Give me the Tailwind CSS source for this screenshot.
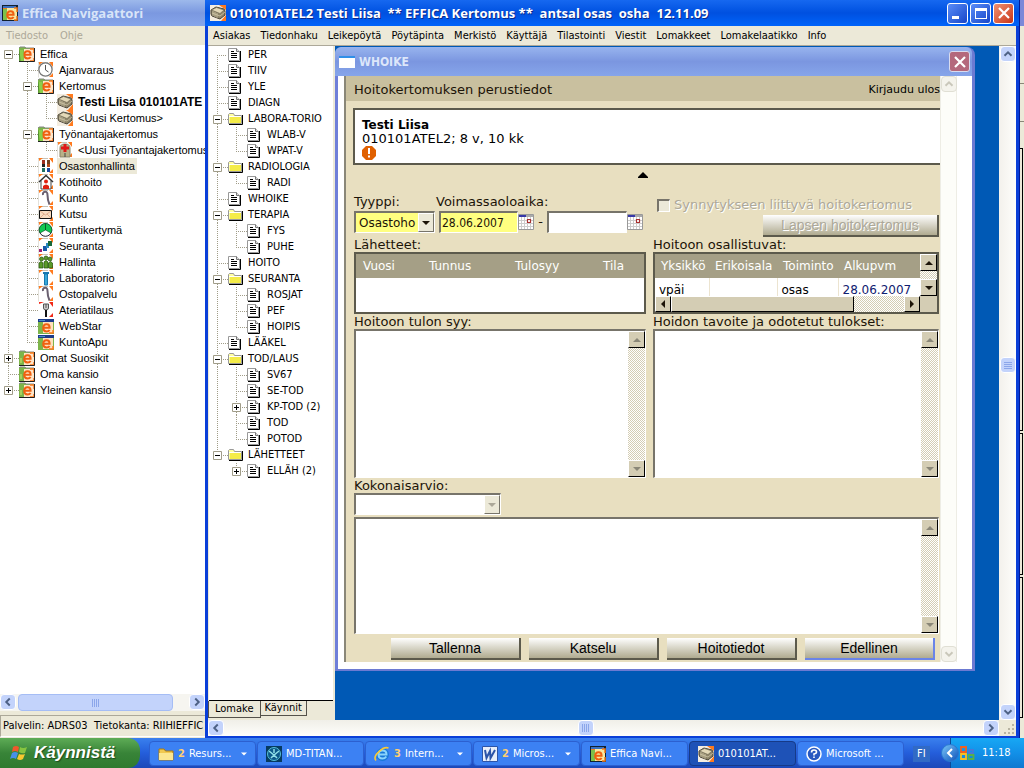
<!DOCTYPE html>
<html lang="fi">
<head>
    <meta charset="UTF-8">
    <meta name="viewport" content="width=device-width, initial-scale=1">
    <title>Effica Kertomus</title>
    <script src="https://cdn.jsdelivr.net/npm/@tailwindcss/browser@4"></script>
</head>
<body class="h-screen flex flex-col overflow-hidden bg-[#ece9d8] text-black font-['DejaVu_Sans_Condensed','DejaVu_Sans',sans-serif] text-[11px] leading-4">

    <!-- icon sprite -->
    <svg class="hidden" xmlns="http://www.w3.org/2000/svg">
        <symbol id="line-v" viewBox="0 0 19 16"><path d="M8.5 0V16" fill="none" stroke="#a09c88" stroke-dasharray="1 1"/></symbol>
        <symbol id="line-f" viewBox="0 0 19 16"><path d="M8.5 8V16M8 8.5H18" fill="none" stroke="#a09c88" stroke-dasharray="1 1"/></symbol>
        <symbol id="line-t" viewBox="0 0 19 16"><path d="M8.5 0V16M10 8.5H19" fill="none" stroke="#a09c88" stroke-dasharray="1 1"/></symbol>
        <symbol id="line-l" viewBox="0 0 19 16"><path d="M8.5 0V8M8 8.5H19" fill="none" stroke="#a09c88" stroke-dasharray="1 1"/></symbol>
        <symbol id="line-r" viewBox="0 0 19 16"><path d="M8.5 12V16M14 8.5H19" fill="none" stroke="#a09c88" stroke-dasharray="1 1"/><path d="M4.500 4.500h8v8h-8z" fill="#fff" stroke="#a09c88"/><path d="M6 8.500h5" stroke="#000"/></symbol>
        <symbol id="line-m" viewBox="0 0 19 16"><path d="M8.5 0V4M8.5 13V16M14 8.5H19" fill="none" stroke="#a09c88" stroke-dasharray="1 1"/><path d="M4.500 4.500h8v8h-8z" fill="#fff" stroke="#a09c88"/><path d="M6 8.500h5" stroke="#000"/></symbol>
        <symbol id="line-M" viewBox="0 0 19 16"><path d="M8.5 0V4M14 8.5H19" fill="none" stroke="#a09c88" stroke-dasharray="1 1"/><path d="M4.500 4.500h8v8h-8z" fill="#fff" stroke="#a09c88"/><path d="M6 8.500h5" stroke="#000"/></symbol>
        <symbol id="line-p" viewBox="0 0 19 16"><path d="M8.5 0V4M8.5 13V16M14 8.5H19" fill="none" stroke="#a09c88" stroke-dasharray="1 1"/><path d="M4.500 4.500h8v8h-8z" fill="#fff" stroke="#a09c88"/><path d="M6 8.500h5M8.500 6v5" stroke="#000"/></symbol>
        <symbol id="line-P" viewBox="0 0 19 16"><path d="M8.5 0V4M14 8.5H19" fill="none" stroke="#a09c88" stroke-dasharray="1 1"/><path d="M4.500 4.500h8v8h-8z" fill="#fff" stroke="#a09c88"/><path d="M6 8.500h5M8.500 6v5" stroke="#000"/></symbol>

        <symbol id="swirl" viewBox="0 0 16 16"><path d="M5 8.700h6.600c0-2-1-3.400-3-3.400-2.200 0-3.400 1.600-3.400 3.800 0 2.200 1.400 3.400 3.400 3.400 1.400 0 2.400-.6 3-1.600" fill="none" stroke="#f06010" stroke-width="2"/></symbol>
        <symbol id="efolder" viewBox="0 0 16 16"><path d="M0 2 1 1h5l1 1h8v14H0z" fill="#7db54a"/><path d="M0 2 1 1h5l1 1h8" fill="none" stroke="#888" /><path d="M5 3h10v12H5z" fill="#ffe6c8"/><path d="M11 3h4v4M15 12v3h-4" fill="none" stroke="#ff7a1e" stroke-width="1.500"/><path d="M1 8h2v5H1z" fill="#a9cf5c"/><use href="#swirl"/><path d="M15.500 2v13.500H0" fill="none" stroke="#222"/></symbol>
        <symbol id="eopen" viewBox="0 0 16 16"><use href="#efolder"/><path d="M0 4h4l1 11H1z" fill="#8ccf4a"/><path d="M0 4l1 11" stroke="#4c8a2c"/></symbol>
        <symbol id="eweb" viewBox="0 0 16 16"><path d="M0 1h16v15H0z" fill="#7db54a"/><path d="M5 4h10v11H5z" fill="#ffe0bc"/><path d="M15 12v3h-4" fill="none" stroke="#ff7a1e" stroke-width="1.500"/><path d="M0 1h16v3H0z" fill="#1c3b8a"/><path d="M1 2h6v1H1z" fill="#4a90c8"/><use href="#swirl" y="1"/></symbol>
        <symbol id="elogo" viewBox="0 0 16 16"><path d="M0 0h16v16H0z" fill="#102030"/><path d="M1 1h4v3H1z" fill="#f08020"/><path d="M1 4h4v11H1z" fill="#7cc04a"/><path d="M5 3h10v12H5z" fill="#f8e7a0"/><path d="M1 1h13v2H1z" fill="#3a70c0"/><path d="M12 3h3v4M15 11v4h-3" fill="none" stroke="#f07818" stroke-width="1.500"/><use href="#swirl" y="1"/></symbol>
        <symbol id="corners" viewBox="0 0 16 16"><path d="M0 0h16v16H0z" fill="#fff"/><path d="M0 15.500V.500h10" fill="none" stroke="#c8c4b8"/><path d="M1 0h4L1 3zM11 0h4v5zM15 11v4h-4z" fill="#ff7a1e"/></symbol>
        <symbol id="clock" viewBox="0 0 16 16"><use href="#corners"/><circle cx="7.500" cy="7.500" r="6.600" fill="#fff" stroke="#777" stroke-width="1.300"/><path d="M7.500 3v5l3 2" fill="none" stroke="#555" /></symbol>
        <symbol id="box" viewBox="0 0 16 16"><path d="M0 0h16v16H0z" fill="#f4ede0"/><path d="M9 0h7v5zM16 10v6h-5z" fill="#ff7a1e"/><path d="M1 5l5-3 8 2 1 2v4l-5 4-8-3-1-2z" fill="#8d8468" stroke="#4a4438"/><path d="M1.500 5l5-2.500L14 5l-4 3.500z" fill="#e4d9b8" stroke="#6b6450" stroke-width=".6"/><path d="M2 8l8 3 5-4M3 6v5M5 7v5M7 8v5" fill="none" stroke="#d8ceb0" stroke-width=".7"/></symbol>
        <symbol id="cross" viewBox="0 0 16 16"><use href="#corners"/><path d="M3 15V6q0-4 5-4t5 4v9z" fill="#b8b088" stroke="#8a8466"/><path d="M8 2v8M4 6h8" stroke="#e01818" stroke-width="3"/><path d="M8 11v4" stroke="#444"/></symbol>
        <symbol id="people" viewBox="0 0 16 16"><use href="#corners"/><path d="M4 2h3v4H4z" fill="#a03020"/><path d="M9 2h3v4H9z" fill="#704020"/><path d="M4 6h3v3H4z" fill="#222"/><path d="M9 6h3v3H9z" fill="#b84818"/><path d="M4 10h3v4H4z" fill="#207060"/><path d="M9 10h3v4H9z" fill="#1848a0"/></symbol>
        <symbol id="house" viewBox="0 0 16 16"><use href="#corners"/><path d="M3 7v8h10V7" fill="#fff" stroke="#444"/><path d="M1 8 8 1.500 15 8" fill="none" stroke="#333" stroke-width="1.600"/><circle cx="8" cy="7.500" r="2" fill="#e02010"/><path d="M5 15v-3q3-3 6 0v3z" fill="#e02010"/></symbol>
        <symbol id="cane" viewBox="0 0 16 16"><use href="#corners"/><path d="M5 5q-.5-3 2-3.200T9.500 5q0 5 2 9.500" fill="none" stroke="#6a6070" stroke-width="2"/></symbol>
        <symbol id="mail" viewBox="0 0 16 16"><use href="#corners"/><path d="M1.500 4.500h12v8h-12z" fill="#f8dcc0" stroke="#111"/><path d="M2 5l5.500 4L13 5M2 12l4-4M13 12 9 8" fill="none" stroke="#d8a080" stroke-width=".8"/></symbol>
        <symbol id="pie" viewBox="0 0 16 16"><use href="#corners"/><circle cx="7.500" cy="8" r="6.300" fill="#fff" stroke="#223"/><path d="M7.500 8V1.500A6.400 6.400 0 0 0 2 11zM7.500 8V1.500A6.400 6.400 0 0 1 13 11z" fill="#10c850" stroke="#084820" stroke-width=".6"/></symbol>
        <symbol id="chart" viewBox="0 0 16 16"><use href="#corners"/><path d="M1 11h3v3H1z" fill="#a02070"/><path d="M5 8h4v5H5z" fill="#1858a8"/><path d="M8 5h3v5H8z" fill="#2888c0"/><path d="M10 3h4v5h-4z" fill="#186838"/></symbol>
        <symbol id="group" viewBox="0 0 16 16"><use href="#corners"/><g fill="#5a9a28" stroke="#245010" stroke-width=".7"><circle cx="3.500" cy="5" r="2"/><circle cx="8" cy="4" r="2"/><circle cx="12" cy="5" r="2"/><path d="M1 14V9q2-3 4 0v5zM6 14V8q2-3 4 0v6zM10.500 14V9q2-3 4 0v5z"/></g></symbol>
        <symbol id="tube" viewBox="0 0 16 16"><use href="#corners"/><path d="M5 2h6v2H5z" fill="#1878b0"/><path d="M6.500 4h3v11h-3z" fill="#38a8d8" stroke="#1878b0"/></symbol>
        <symbol id="fork" viewBox="0 0 16 16"><path d="M0 0h16v16H0z" fill="#fff"/><path d="M1 0h5L1 2zM11 0h4v5zM15 11v4h-4z" fill="#f02818"/><path d="M5.500 2v4q0 2 2.500 2t2.500-2V2z" fill="#ccc" stroke="#555"/><path d="M8 2v4" stroke="#555"/><path d="M8 8v7" stroke="#111" stroke-width="2"/></symbol>
        <symbol id="doc" viewBox="0 0 16 16"><path d="M.5 1.500h8l3 3v9H.5z" fill="#fff" stroke="#999"/><path d="M8.500 1.500v3h3" fill="#ddd" stroke="#777"/><path d="M12.500 4v10.500H1" fill="none" stroke="#000"/><path d="M3 4.500h3M3 6.500h6M3 8.500h6M3 10.500h6" stroke="#000"/></symbol>
        <symbol id="folder" viewBox="0 0 16 16"><path d="M.5 12.500v-9l1-1h4l1 2h7v8z" fill="#ffffa0" stroke="#999"/><path d="M1 5.500h12" stroke="#fff"/><path d="M2 6h11v6H2z" fill="#f4ec48"/><path d="M14.500 4v9.500H1" fill="none" stroke="#000"/></symbol>

        <symbol id="chev-l" viewBox="0 0 16 16"><path d="M10 4 6 8l4 4" fill="none" stroke="#4d6185" stroke-width="2.200"/></symbol>
        <symbol id="chev-r" viewBox="0 0 16 16"><path d="M6 4l4 4-4 4" fill="none" stroke="#4d6185" stroke-width="2.200"/></symbol>
        <symbol id="chev-u" viewBox="0 0 16 16"><path d="M4 10l4-4 4 4" fill="none" stroke="currentColor" stroke-width="2.200"/></symbol>
        <symbol id="chev-d" viewBox="0 0 16 16"><path d="M4 6l4 4 4-4" fill="none" stroke="currentColor" stroke-width="2.200"/></symbol>
        <symbol id="tri-u" viewBox="0 0 8 8"><path d="M0 6h8L4 2z" fill="currentColor"/></symbol>
        <symbol id="tri-d" viewBox="0 0 8 8"><path d="M0 2h8L4 6z" fill="currentColor"/></symbol>
        <symbol id="tri-l" viewBox="0 0 8 8"><path d="M6 0v8L2 4z" fill="currentColor"/></symbol>
        <symbol id="tri-r" viewBox="0 0 8 8"><path d="M2 0v8l4-4z" fill="currentColor"/></symbol>
        <symbol id="cal" viewBox="0 0 16 16"><path d="M.5.500h15v15H.5z" fill="#fff" stroke="#999"/><path d="M1 1h14v2H1z" fill="#aaa"/><path d="M1 1h7v2H1z" fill="#3838a8"/><path d="M1 6.500h14M1 9.500h14M1 12.500h14M3.500 3v12M6.500 3v12M9.500 3v12M12.500 3v12" stroke="#ccc"/><path d="M9.500 5.500h3v3h-3z" fill="#fff" stroke="#a83030" stroke-width="1.200"/></symbol>
    </svg>

    <main class="flex flex-1 min-h-0">

        <!-- navigator window -->
        <section class="w-[205px] shrink-0 flex flex-col bg-[#ece9d8] overflow-hidden whitespace-nowrap">
            <header class="h-[26px] flex items-center gap-1 px-0.5 bg-linear-to-b from-[#9db9eb] via-[#7b98e0] to-[#86a5ea] text-[#d8e4f8]">
                <svg class="size-4"><use href="#elogo"/></svg>
                <h1 class="font-['Open_Sans',sans-serif] text-[13px] font-bold">Effica Navigaattori</h1>
            </header>
            <nav class="h-[19px] flex items-center gap-3 px-1.5 text-[#aca899]">
                <button>Tiedosto</button>
                <button>Ohje</button>
            </nav>
            <div class="flex-1 min-h-0 bg-white pt-px overflow-hidden font-['Liberation_Sans',Arial,sans-serif]">
                <ul id="nav-tree"></ul>
            </div>
            <div class="h-[18px] flex bg-[#f6f5f0] border-t border-white">
                <button aria-label="Vasen" class="size-4 rounded-sm bg-[#c3d3fb] border border-white"><svg class="size-3.5"><use href="#chev-l"/></svg></button>
                <div class="ml-0.5 w-[155px] rounded-sm bg-[#c3d3fb] border border-[#a5bdf5] flex items-center justify-center gap-px">
                    <i class="w-px h-2 bg-[#8ba6ea]"></i><i class="w-px h-2 bg-[#8ba6ea]"></i><i class="w-px h-2 bg-[#8ba6ea]"></i><i class="w-px h-2 bg-[#8ba6ea]"></i>
                </div>
                <button aria-label="Oikea" class="ml-auto size-4 rounded-sm bg-[#c3d3fb] border border-white"><svg class="size-3.5"><use href="#chev-r"/></svg></button>
            </div>
            <footer class="h-[27px] flex items-center pt-1">
                <p class="flex-1 mb-0.5 px-0.5 border border-[#aca899] border-r-0 border-b-white leading-5">Palvelin: ADRS03&nbsp; Tietokanta: RIIHIEFFIC</p>
            </footer>
        </section>

        <!-- patient record window -->
        <section class="flex-1 min-w-0 flex flex-col bg-[#0a3fd8]">
            <header class="h-[26px] shrink-0 flex items-center pl-[5px] pr-[5px] bg-linear-to-b from-[#1668f0] via-[#0050e0] to-[#0064fa] text-white">
                <svg class="size-4 mr-1"><use href="#box"/></svg>
                <h2 class="flex-1 font-['Open_Sans',sans-serif] text-[13px] font-bold whitespace-pre text-shadow-[1px_1px_0_#0a2a8c]">010101ATEL2 Testi Liisa  ** EFFICA Kertomus **  antsal osas  osha  12.11.09</h2>
                <div class="flex gap-0.5">
                    <button aria-label="Pienennä" class="size-[21px] rounded-[3px] border border-white bg-linear-to-br from-[#5a8cf8] to-[#1844c8] flex items-end p-1"><i class="w-[7px] h-[3px] bg-white"></i></button>
                    <button aria-label="Suurenna" class="size-[21px] rounded-[3px] border border-white bg-linear-to-br from-[#5a8cf8] to-[#1844c8] flex items-center justify-center"><i class="w-3 h-[11px] border border-t-[3px] border-white"></i></button>
                    <button aria-label="Sulje" class="size-[21px] rounded-[3px] border border-white bg-linear-to-br from-[#f09070] to-[#c83010] flex items-center justify-center"><svg class="size-3" viewBox="0 0 12 12"><path d="M1 1l10 10M11 1 1 11" stroke="#fff" stroke-width="2.200"/></svg></button>
                </div>
            </header>
            <div class="flex-1 min-h-0 flex flex-col mx-[3px] mb-0.5 bg-[#ece9d8]">
                <nav class="h-[19px] shrink-0 flex items-center gap-2.5 px-[5px]">
                    <button>Asiakas</button>
                    <button>Tiedonhaku</button>
                    <button>Leikepöytä</button>
                    <button>Pöytäpinta</button>
                    <button>Merkistö</button>
                    <button>Käyttäjä</button>
                    <button>Tilastointi</button>
                    <button>Viestit</button>
                    <button>Lomakkeet</button>
                    <button>Lomakelaatikko</button>
                    <button>Info</button>
                </nav>
                <div class="flex-1 min-h-0 flex border-t border-[#aca899]">

                    <!-- form tree with tabs -->
                    <div class="w-[127px] shrink-0 flex flex-col">
                        <div class="flex-1 min-h-0 ml-px bg-white pt-px mr-0.5 border-b border-black overflow-hidden">
                            <ul id="form-tree"></ul>
                        </div>
                        <div class="h-[19px] flex items-start">
                            <button class="h-[17px] px-1.5 border border-t-0 border-[#55524a]">Lomake</button>
                            <button class="h-[15px] px-1 border border-l-0 border-t-0 border-[#55524a] leading-3">Käynnit</button>
                        </div>
                    </div>

                    <!-- MDI area -->
                    <div class="flex-1 min-w-0 flex bg-[#0059b5]">
                        <article class="flex-1 min-w-0 mt-px mr-6 mb-[49px] flex flex-col rounded-t-lg bg-[#6f7fd8] border-r-[3px] border-b-2 border-[#6c7ad2]">
                            <header class="h-[29px] shrink-0 flex items-center gap-1 pl-1 pr-0.5 rounded-t-md bg-linear-to-b from-[#98b4ee] via-[#7b96e0] to-[#86a5ea] text-[#dce6fa]">
                                <i class="w-4 h-3 bg-white border-t-2 border-[#2f8fe8]"></i>
                                <h3 class="flex-1 text-xs font-bold">WHOIKE</h3>
                                <button aria-label="Sulje WHOIKE" class="size-[21px] rounded-[3px] border border-[#d8dcf0] bg-[#b4687c] flex items-center justify-center"><svg class="size-3" viewBox="0 0 12 12"><path d="M1 1l10 10M11 1 1 11" stroke="#fff" stroke-width="2.200"/></svg></button>
                            </header>
                            <div class="flex-1 min-h-0 flex bg-white ml-[3px] pl-1.5 pr-[15px] pb-[7px] font-['DejaVu_Sans',Verdana,sans-serif] text-[13px]">
                                <form class="flex-1 min-w-0 flex flex-col border-l-2 border-[#8a8778] bg-[#e8dfc0] text-[#1c1408]">
                                    <div class="h-[25px] shrink-0 flex items-center justify-between pl-2 pt-0.5 bg-[#c9c09f]">
                                        <h4>Hoitokertomuksen perustiedot</h4>
                                        <a href="#" class="text-[11px] text-black">Kirjaudu ulos</a>
                                    </div>
                                    <div class="ml-[7px] mt-[7px] h-[57px] shrink-0 border-2 border-r-0 border-[#5c5a4c] bg-white text-black px-[7px] pt-2 leading-3.5">
                                        <p class="font-bold text-xs leading-3.5">Testi Liisa</p>
                                        <p>010101ATEL2; 8 v, 10 kk</p>
                                        <svg class="size-3.5" viewBox="0 0 14 14"><path d="M4 0h6l4 4v6l-4 4H4l-4-4V4z" fill="#e06000"/><path d="M6 2h2v6H6zM6 9.500h2v2H6z" fill="#fff"/></svg>
                                    </div>
                                    <div class="h-7 shrink-0 flex justify-center pt-1.5"><svg class="size-3" viewBox="0 0 12 12"><path d="M1 7h10v-1L6 1 1 6z"/></svg></div>

                                    <div class="flex-1 min-h-0 flex flex-col pl-2 pr-px">
                                        <div class="grid grid-cols-[292fr_286fr] gap-x-[7px]">
                                            <div class="flex items-start">
                                                <div class="flex flex-col w-[85px]">
                                                    <label for="type" class="leading-[18px]">Tyyppi:</label>
                                                    <div class="w-[81px] h-[22px] flex border border-[#77746a] border-r-white border-b-white border-t-2 border-l-2 bg-[#ffff80]">
                                                        <select id="type" class="flex-1 min-w-0 appearance-none bg-[#ffff80] pl-[3px] text-xs"><option>Osastoho</option></select>
                                                        <span class="w-4 flex items-center justify-center bg-[#ece9d8] border border-white border-r-[#77746a] border-b-[#77746a]"><svg class="size-2"><use href="#tri-d"/></svg></span>
                                                    </div>
                                                </div>
                                                <div class="flex flex-col">
                                                    <label for="from" class="-ml-[3px] leading-[18px]">Voimassaoloaika:</label>
                                                    <div class="flex items-center">
                                                        <input id="from" value="28.06.2007" class="w-[79px] h-[22px] px-px font-['DejaVu_Sans_Condensed','DejaVu_Sans',sans-serif] text-xs bg-[#ffff80] border border-[#77746a] border-r-white border-b-white border-t-2 border-l-2">
                                                        <button type="button" aria-label="Kalenteri"><svg class="size-4"><use href="#cal"/></svg></button>
                                                        <span class="w-[13px] text-center">-</span>
                                                        <input id="to" aria-label="Päättyy" class="w-20 h-[22px] px-px font-['DejaVu_Sans_Condensed','DejaVu_Sans',sans-serif] text-xs bg-white border border-[#77746a] border-r-white border-b-white border-t-2 border-l-2">
                                                        <button type="button" aria-label="Kalenteri"><svg class="size-4"><use href="#cal"/></svg></button>
                                                    </div>
                                                </div>
                                            </div>
                                            <div class="flex flex-col pt-[3px] pb-px">
                                                <label class="flex items-center gap-1 pl-1 leading-[18px] mb-px text-[#aca899] text-shadow-[1px_1px_0_#fff] whitespace-nowrap">
                                                    <input type="checkbox" disabled class="appearance-none size-[13px] bg-[#ece9d8] border border-t-2 border-l-2 border-[#77746a] border-r-white border-b-white">
                                                    Synnytykseen liittyvä hoitokertomus
                                                </label>
                                                <button type="button" disabled class="self-end w-44 h-[22px] font-['Liberation_Sans',Arial,sans-serif] text-sm leading-[18px] bg-linear-to-b from-white to-[#b0ab90] border-r-2 border-b-2 border-[#5c5a4c] text-[#aca899] text-shadow-[1px_1px_0_#fff]">Lapsen hoitokertomus</button>
                                            </div>

                                            <div class="flex flex-col">
                                                <h5 class="leading-[14px]">Lähetteet:</h5>
                                                <div class="h-[62px] border-2 border-[#5c5a4c] bg-white">
                                                    <table class="w-full table-fixed text-left">
                                                        <thead class="bg-[#a59f86] text-white text-xs">
                                                            <tr>
                                                                <th class="w-[66px] h-6 pl-[7px] font-normal">Vuosi</th>
                                                                <th class="w-[86px] pl-[7px] font-normal">Tunnus</th>
                                                                <th class="w-[88px] pl-[7px] font-normal">Tulosyy</th>
                                                                <th class="pl-[7px] font-normal">Tila</th>
                                                            </tr>
                                                        </thead>
                                                    </table>
                                                </div>
                                            </div>
                                            <div class="flex flex-col">
                                                <h5 class="leading-[14px]">Hoitoon osallistuvat:</h5>
                                                <div class="h-[62px] flex border-2 border-[#5c5a4c] bg-[#d4cdb4]">
                                                    <div class="flex-1 min-w-0 flex flex-col">
                                                        <div class="flex-1 min-h-0 overflow-hidden bg-white">
                                                            <table class="w-full table-fixed text-left text-xs text-black">
                                                                <thead class="bg-[#a59f86] text-white">
                                                                    <tr>
                                                                        <th class="w-[54px] h-6 pl-1.5 font-normal">Yksikkö</th>
                                                                        <th class="w-[68px] pl-1.5 font-normal">Erikoisala</th>
                                                                        <th class="w-[61px] pl-1.5 font-normal">Toiminto</th>
                                                                        <th class="pl-1.5 font-normal">Alkupvm</th>
                                                                    </tr>
                                                                </thead>
                                                                <tbody>
                                                                    <tr>
                                                                        <td class="pl-1 pt-1 border-r border-[#ece4d0]">vpäi</td>
                                                                        <td class="border-r border-[#ece4d0]"></td>
                                                                        <td class="pl-1 pt-1 border-r border-[#ece4d0]">osas</td>
                                                                        <td class="pl-1 pt-1 text-[#102070]">28.06.2007</td>
                                                                    </tr>
                                                                </tbody>
                                                            </table>
                                                        </div>
                                                        <div class="h-4 flex bg-[repeating-conic-gradient(#d4cdb4_0_25%,#fff_0_50%)] bg-[length:2px_2px]">
                                                            <button type="button" aria-label="Vasen" class="size-4 flex items-center justify-center bg-[#d4cdb4] border border-white border-r-black border-b-black"><svg class="size-2"><use href="#tri-l"/></svg></button>
                                                            <div class="w-[183px] bg-[#d4cdb4] border border-white border-r-black border-b-black"></div>
                                                            <button type="button" aria-label="Oikea" class="ml-auto size-4 flex items-center justify-center bg-[#d4cdb4] border border-white border-r-black border-b-black"><svg class="size-2"><use href="#tri-r"/></svg></button>
                                                        </div>
                                                    </div>
                                                    <div class="w-[17px] mb-4 flex flex-col justify-between bg-[repeating-conic-gradient(#d4cdb4_0_25%,#fff_0_50%)] bg-[length:2px_2px]">
                                                        <button type="button" aria-label="Ylös" class="h-[17px] flex items-center justify-center bg-[#d4cdb4] border border-white border-r-black border-b-black"><svg class="size-2"><use href="#tri-u"/></svg></button>
                                                        <button type="button" aria-label="Alas" class="h-[17px] flex items-center justify-center bg-[#d4cdb4] border border-white border-r-black border-b-black"><svg class="size-2"><use href="#tri-d"/></svg></button>
                                                    </div>
                                                </div>
                                            </div>

                                            <div class="flex flex-col">
                                                <label for="reason" class="leading-[15px]">Hoitoon tulon syy:</label>
                                                <div class="h-[149px] flex border border-[#77746a] border-t-2 border-l-2 border-r-white border-b-white bg-white">
                                                    <textarea id="reason" class="flex-1 min-w-0 resize-none p-1"></textarea>
                                                    <div class="w-[17px] flex flex-col justify-between bg-[repeating-conic-gradient(#d4cdb4_0_25%,#fff_0_50%)] bg-[length:2px_2px] text-[#8a8778]">
                                                        <button type="button" disabled aria-label="Ylös" class="h-[17px] flex items-center justify-center bg-[#d4cdb4] border border-white border-r-black border-b-black"><svg class="size-2"><use href="#tri-u"/></svg></button>
                                                        <button type="button" disabled aria-label="Alas" class="h-[17px] flex items-center justify-center bg-[#d4cdb4] border border-white border-r-black border-b-black"><svg class="size-2"><use href="#tri-d"/></svg></button>
                                                    </div>
                                                </div>
                                            </div>
                                            <div class="flex flex-col">
                                                <label for="goal" class="leading-[15px]">Hoidon tavoite ja odotetut tulokset:</label>
                                                <div class="h-[149px] flex border border-[#77746a] border-t-2 border-l-2 border-r-white border-b-white bg-white">
                                                    <textarea id="goal" class="flex-1 min-w-0 resize-none p-1"></textarea>
                                                    <div class="w-[17px] flex flex-col justify-between bg-[repeating-conic-gradient(#d4cdb4_0_25%,#fff_0_50%)] bg-[length:2px_2px] text-[#8a8778]">
                                                        <button type="button" disabled aria-label="Ylös" class="h-[17px] flex items-center justify-center bg-[#d4cdb4] border border-white border-r-black border-b-black"><svg class="size-2"><use href="#tri-u"/></svg></button>
                                                        <button type="button" disabled aria-label="Alas" class="h-[17px] flex items-center justify-center bg-[#d4cdb4] border border-white border-r-black border-b-black"><svg class="size-2"><use href="#tri-d"/></svg></button>
                                                    </div>
                                                </div>
                                            </div>
                                        </div>

                                        <label for="overall" class="leading-[15px]">Kokonaisarvio:</label>
                                        <div class="w-[147px] h-[22px] shrink-0 flex border border-[#77746a] border-t-2 border-l-2 border-r-white border-b-white bg-white">
                                            <select id="overall" disabled class="flex-1 min-w-0 appearance-none bg-white pl-1 text-xs"><option></option></select>
                                            <span class="w-4 flex items-center justify-center bg-[#ece9d8] text-[#aca899] border border-white border-r-[#77746a] border-b-[#77746a]"><svg class="size-2"><use href="#tri-d"/></svg></span>
                                        </div>
                                        <div class="mt-0.5 flex-1 min-h-0 flex border border-[#77746a] border-t-2 border-l-2 border-r-white border-b-white bg-white">
                                            <textarea aria-label="Kokonaisarvion perustelu" class="flex-1 min-w-0 resize-none p-1"></textarea>
                                            <div class="w-[17px] flex flex-col justify-between bg-[repeating-conic-gradient(#d4cdb4_0_25%,#fff_0_50%)] bg-[length:2px_2px] text-[#8a8778]">
                                                <button type="button" disabled aria-label="Ylös" class="h-[17px] flex items-center justify-center bg-[#d4cdb4] border border-white border-r-black border-b-black"><svg class="size-2"><use href="#tri-u"/></svg></button>
                                                <button type="button" disabled aria-label="Alas" class="h-[17px] flex items-center justify-center bg-[#d4cdb4] border border-white border-r-black border-b-black"><svg class="size-2"><use href="#tri-d"/></svg></button>
                                            </div>
                                        </div>
                                        <div class="mt-1 mb-0.5 mr-1 flex justify-end gap-2 font-['Liberation_Sans',Arial,sans-serif] text-sm leading-[18px] text-black">
                                            <button type="button" class="w-[130px] h-[22px] bg-linear-to-b from-white to-[#b0ab90] border-r-2 border-b-2 border-[#5c5a4c]">Tallenna</button>
                                            <button type="button" class="w-[130px] h-[22px] bg-linear-to-b from-white to-[#b0ab90] border-r-2 border-b-2 border-[#5c5a4c]">Katselu</button>
                                            <button type="button" class="w-[130px] h-[22px] bg-linear-to-b from-white to-[#b0ab90] border-r-2 border-b-2 border-[#5c5a4c]">Hoitotiedot</button>
                                            <button type="button" class="w-[130px] h-[22px] bg-linear-to-b from-white to-[#b0ab90] border-r-2 border-b-2 border-[#6a84e8]">Edellinen</button>
                                        </div>
                                    </div>
                                </form>
                                <div class="w-[17px] flex flex-col justify-between bg-[#fdfdf9] border-x border-[#eeede5] text-[#c9c7ba]">
                                    <button aria-label="Ylös" disabled class="size-4 rounded-sm border border-[#e0dfd4] bg-[#f4f3ec]"><svg class="size-3.5"><use href="#chev-u"/></svg></button>
                                    <button aria-label="Alas" disabled class="size-4 rounded-sm border border-[#e0dfd4] bg-[#f4f3ec]"><svg class="size-3.5"><use href="#chev-d"/></svg></button>
                                </div>
                            </div>
                        </article>
                    </div>

                    <div class="w-[17px] shrink-0 flex flex-col justify-between items-center bg-linear-to-r from-[#f3f1ec] to-[#fefefb] text-[#4d6185]">
                        <button aria-label="Ylös" class="size-4 rounded-sm bg-[#c3d3fb] border border-white"><svg class="size-3.5"><use href="#chev-u"/></svg></button>
                        <div class="size-4 -mt-9 rounded-sm bg-[#c3d3fb] border border-white flex flex-col items-center justify-center gap-px"><i class="w-2 h-px bg-[#8ba6ea]"></i><i class="w-2 h-px bg-[#8ba6ea]"></i><i class="w-2 h-px bg-[#8ba6ea]"></i><i class="w-2 h-px bg-[#8ba6ea]"></i></div>
                        <button aria-label="Alas" class="size-4 rounded-sm bg-[#c3d3fb] border border-white"><svg class="size-3.5"><use href="#chev-d"/></svg></button>
                    </div>
                </div>
                <div class="h-4 shrink-0 flex">
                    <div class="flex-1 flex justify-between bg-linear-to-b from-[#f0efe8] to-[#fefefb]">
                        <button aria-label="Vasen" class="size-4 rounded-sm bg-[#c3d3fb] border border-white"><svg class="size-3.5"><use href="#chev-l"/></svg></button>
                        <div class="size-4 mr-9 rounded-sm bg-[#c3d3fb] border border-white flex items-center justify-center gap-px"><i class="w-px h-2 bg-[#8ba6ea]"></i><i class="w-px h-2 bg-[#8ba6ea]"></i><i class="w-px h-2 bg-[#8ba6ea]"></i><i class="w-px h-2 bg-[#8ba6ea]"></i></div>
                        <button aria-label="Oikea" class="size-4 rounded-sm bg-[#c3d3fb] border border-white"><svg class="size-3.5"><use href="#chev-r"/></svg></button>
                    </div>
                    <svg class="w-[17px] h-4" viewBox="0 0 17 16"><path d="M13 4h2v2h-2zM9 8h2v2H9zM13 8h2v2h-2zM5 12h2v2H5zM9 12h2v2H9zM13 12h2v2h-2z" fill="#b8b4a2"/></svg>
                </div>
            </div>
        </section>

        <!-- edge of the window behind -->
        <aside class="w-[5px] shrink-0 flex flex-col bg-[#ece9d8] border-l border-[#001a9c]">
            <div class="h-[26px] bg-[#7b88d8]"></div>
            <div class="h-[58px] border-b border-[#8a8778]"></div>
            <div class="h-[38px] border-b border-[#8a8778]"></div>
            <div class="h-[26px] bg-[#ece9d8]"></div>
            <div class="h-[283px] mr-px border-r border-y border-black bg-[#ece9d8]"></div>
            <div class="h-[142px] mt-0.5 mr-px border-r border-y border-black bg-[#ece9d8]"></div>
            <div class="h-[141px] mt-0.5 mr-px border-r border-y border-black bg-[#ece9d8]"></div>
        </aside>
    </main>

    <!-- taskbar -->
    <footer class="h-[30px] shrink-0 flex items-stretch bg-linear-to-b from-[#3a80ee] via-[#245edb] to-[#1c48b8] text-white whitespace-nowrap">
        <button class="w-[140px] flex items-center gap-1.5 pl-2.5 rounded-r-xl bg-linear-to-b from-[#5eac56] via-[#388438] to-[#2f7a2f] font-['Liberation_Sans',Arial,sans-serif] text-[17px] font-bold italic text-shadow-[1px_1px_1px_#1c4c1c]">
            <svg class="size-[18px]" viewBox="0 0 18 18"><path d="M3 3q3-2 6 0L8 8Q5 6 2 8z" fill="#f0582c"/><path d="M10 3q3 2 7 0l-2 6q-3 1-6-1z" fill="#86c440"/><path d="M2 9q3-2 6 0l-2 6q-3-2-6 0z" fill="#4890e8"/><path d="M9 10q3 1 6 0l-2 5q-3 2-6 0z" fill="#f8c830"/></svg>
            Käynnistä
        </button>
        <div class="flex flex-1 gap-px pl-[9px] pb-0.5 pt-[3px]">
            <button class="w-[107px] flex items-center gap-1 px-2 rounded-sm border border-[#2c60d0] bg-[#3c81f3]">
                <svg class="size-4" viewBox="0 0 16 16"><path d="M1 3h5l1.500 2H15v9H1z" fill="#f0c850" stroke="#a87810"/><path d="M1 7h14v7H1z" fill="#fbe690"/></svg>
                <b class="text-[#ffcf70]">2</b><span class="flex-1 text-left">Resurs...</span><svg class="size-1.5"><use href="#tri-d"/></svg>
            </button>
            <button class="w-[107px] flex items-center gap-1 px-2 rounded-sm border border-[#2c60d0] bg-[#3c81f3]">
                <svg class="size-4" viewBox="0 0 16 16"><path d="M0 0h16v16H0z" fill="#063a60"/><circle cx="8" cy="8" r="6.500" fill="#0c5888" stroke="#58c0d8"/><path d="M3 5l5 4 5-4M5 12l3-3 3 3M8 3v4" fill="none" stroke="#90e0e8" stroke-width="1.500"/></svg>
                <span>MD-TITAN...</span>
            </button>
            <button class="w-[107px] flex items-center gap-1 px-2 rounded-sm border border-[#2c60d0] bg-[#3c81f3]">
                <svg class="size-4" viewBox="0 0 16 16"><circle cx="8.500" cy="8.500" r="6.500" fill="#1878d8"/><path d="M5 8.500h7.500c0-2.500-1.500-4-4-4s-4 1.500-4 4 1.500 4 4 4 3-1 3.700-2" fill="none" stroke="#8ad4fc" stroke-width="2"/><path d="M2 14.500C-2 10 9 0 14.500 2" fill="none" stroke="#f8c838" stroke-width="1.600"/></svg>
                <b class="text-[#ffcf70]">3</b><span class="flex-1 text-left">Intern...</span><svg class="size-1.5"><use href="#tri-d"/></svg>
            </button>
            <button class="w-[107px] flex items-center gap-1 px-2 rounded-sm border border-[#2c60d0] bg-[#3c81f3]">
                <svg class="size-4" viewBox="0 0 16 16"><path d="M.5.500h15v15H.5z" fill="#e8eefa" stroke="#2c54a8"/><path d="M3 4l1.500 8L8 5l.5 7L13 4" fill="none" stroke="#2c54a8" stroke-width="2"/></svg>
                <b class="text-[#ffcf70]">2</b><span class="flex-1 text-left">Micros...</span><svg class="size-1.5"><use href="#tri-d"/></svg>
            </button>
            <button class="w-[107px] flex items-center gap-1 px-2 rounded-sm border border-[#2c60d0] bg-[#3c81f3]">
                <svg class="size-4"><use href="#elogo"/></svg><span>Effica Navi...</span>
            </button>
            <button class="w-[107px] flex items-center gap-1 px-2 rounded-sm border border-[#163a88] bg-[#1e52b7]">
                <svg class="size-4"><use href="#box"/></svg><span>010101AT...</span>
            </button>
            <button class="w-[107px] flex items-center gap-1 px-2 rounded-sm border border-[#2c60d0] bg-[#3c81f3]">
                <svg class="size-4" viewBox="0 0 16 16"><circle cx="8" cy="8" r="7" fill="#2858c0" stroke="#fff" stroke-width="1.500"/><path d="M5.500 6.500q0-2.500 2.500-2.500t2.500 2Q10.500 7.500 8 8v1.500M8 10.500V12" fill="none" stroke="#fff" stroke-width="1.600"/></svg>
                <span>Microsoft ...</span>
            </button>
            <span class="self-center ml-2 px-1 bg-[#316ac5]">FI</span>
        </div>
        <div class="relative w-[74px] flex items-center gap-[7px] pl-2 bg-linear-to-b from-[#18a8f4] via-[#1290e8] to-[#0f78d0] border-l border-[#0c4a98]">
            <button aria-label="Näytä piilotetut" class="absolute -left-2.5 size-[18px]">
                <svg class="size-[18px]" viewBox="0 0 18 18">
                    <linearGradient id="orb" x1="0" y1="0" x2="1" y2="1"><stop offset="0" stop-color="#7cc8fa"/><stop offset="1" stop-color="#0a4fb8"/></linearGradient>
                    <circle cx="9" cy="9" r="8.500" fill="url(#orb)" stroke="#2878d0"/><path d="M11 5 7 9l4 4" fill="none" stroke="#fff" stroke-width="2"/>
                </svg>
            </button>
            <svg class="size-4" viewBox="0 0 16 16"><g fill="none" stroke-width="1.800"><path d="M2 2h5v5H2z" stroke="#f06020"/><path d="M10 5h4v3h-4z" stroke="#4878d8"/><path d="M2 9h5v5H2z" stroke="#f8c020"/><path d="M9.500 10h5v4h-5z" stroke="#58b048"/></g></svg>
            <time>11:18</time>
        </div>
    </footer>

    <script>
        // each row: tree lines per level, icon id, label, row style
        const navRows = [
            ["r", "eopen", "Effica"],
            ["vt", "clock", "Ajanvaraus"],
            ["vm", "eopen", "Kertomus"],
            ["vvt", "box", "Testi Liisa 010101ATE", "font-bold text-xs pl-[5px]"],
            ["vvl", "box", "<Uusi Kertomus>"],
            ["vm", "eopen", "Työnantajakertomus"],
            ["vvl", "cross", "<Uusi Työnantajakertomus"],
            ["vt", "people", "Osastonhallinta", "bg-[#ece9d8] ml-[3px] px-0.5"],
            ["vt", "house", "Kotihoito"],
            ["vt", "cane", "Kunto"],
            ["vt", "mail", "Kutsu"],
            ["vt", "pie", "Tuntikertymä"],
            ["vt", "chart", "Seuranta"],
            ["vt", "group", "Hallinta"],
            ["vt", "tube", "Laboratorio"],
            ["vt", "cane", "Ostopalvelu"],
            ["vt", "fork", "Ateriatilaus"],
            ["vt", "eweb", "WebStar"],
            ["vl", "eweb", "KuntoApu"],
            ["p", "efolder", "Omat Suosikit"],
            ["t", "efolder", "Oma kansio"],
            ["P", "efolder", "Yleinen kansio"]
        ];
        const formRows = [
            ["f", "doc", "PER"],
            ["t", "doc", "TIIV"],
            ["t", "doc", "YLE"],
            ["t", "doc", "DIAGN"],
            ["m", "folder", "LABORA-TORIO"],
            ["vt", "doc", "WLAB-V"],
            ["vl", "doc", "WPAT-V"],
            ["m", "folder", "RADIOLOGIA"],
            ["vl", "doc", "RADI"],
            ["t", "doc", "WHOIKE"],
            ["m", "folder", "TERAPIA"],
            ["vt", "doc", "FYS"],
            ["vl", "doc", "PUHE"],
            ["t", "doc", "HOITO"],
            ["m", "folder", "SEURANTA"],
            ["vt", "doc", "ROSJAT"],
            ["vt", "doc", "PEF"],
            ["vl", "doc", "HOIPIS"],
            ["t", "doc", "LÄÄKEL"],
            ["m", "folder", "TOD/LAUS"],
            ["vt", "doc", "SV67"],
            ["vt", "doc", "SE-TOD"],
            ["vp", "doc", "KP-TOD (2)"],
            ["vt", "doc", "TOD"],
            ["vl", "doc", "POTOD"],
            ["M", "folder", "LÄHETTEET"],
            [" P", "doc", "ELLÄH (2)"]
        ];

        function renderTree(id, rows, textStyle) {
            const list = document.getElementById(id);
            rows.forEach(([lines, icon, label, style]) => {
                const li = document.createElement("li");
                li.className = "flex h-4 whitespace-nowrap";
                li.innerHTML = [...lines].map(c => `<svg class="w-[19px] h-4 shrink-0"><use href="#line-${c}"/></svg>`).join("")
                    + `<svg class="size-4 shrink-0"><use href="#${icon}"/></svg>`;
                const text = document.createElement("span");
                text.className = style || textStyle;
                text.classList.add("leading-4");
                text.textContent = label;
                li.appendChild(text);
                list.appendChild(li);
            });
        }

        renderTree("nav-tree", navRows, "pl-[5px]");
        renderTree("form-tree", formRows, "pl-1");
    </script>
</body>
</html>
